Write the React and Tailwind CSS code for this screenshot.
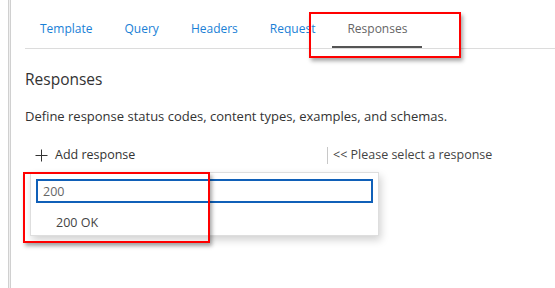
import React from "react";

export default function App() {
  const tabs = ["Template", "Query", "Headers", "Request", "Responses"];
  return (
    <div
      className="relative flex w-[555px] h-[288px] overflow-hidden bg-white"
      style={{ fontFamily: '"Open Sans", "Noto Sans", sans-serif' }}
    >
      <div className="ml-[8px] w-[3px] h-full border-x border-[#d0d0d0] bg-[#efefef]" />
      <div className="flex-1 pl-[14px] flex flex-col">
        <div className="h-[49px] border-b border-[#dcdcdc] flex items-end gap-[2px]">
          {tabs.map((t) => (
            <div
              key={t}
              className={
                "h-[36px] px-[15px] flex items-center text-[12px] border-b-2 " +
                (t === "Responses"
                  ? "text-[#666666] border-[#555555]"
                  : "text-[#1a7fd6] border-transparent")
              }
            >
              {t}
            </div>
          ))}
        </div>
        <div className="mt-[19px] text-[15.5px] leading-[22px] text-[#333333]">Responses</div>
        <div className="mt-[17px] text-[13px] leading-[18px] text-[#333333] whitespace-nowrap">
          Define response status codes, content types, examples, and schemas.
        </div>
        <div className="mt-[21px] flex items-center h-[18px]">
          <div className="w-[302px] flex items-center pl-[10px] text-[12.5px] text-[#333333]">
            <svg width="13" height="13" viewBox="0 0 13 13" className="mr-[7px]">
              <path d="M6.5 0.5v12M0.5 6.5h12" stroke="#333" strokeWidth="1" fill="none" />
            </svg>
            Add response
          </div>
          <div className="h-[17px] w-px bg-[#c8c8c8]" />
          <div className="pl-[5px] text-[12.5px] text-[#444444]">&lt;&lt; Please select a response</div>
        </div>
        <div className="mt-[8px] ml-[5px] w-[349px] h-[64px] border border-[#dedede] bg-white shadow-[2px_4px_8px_rgba(0,0,0,0.18)] p-[5px] pt-[6px]">
          <div className="h-[24px] border-2 border-[#1060b8] flex items-center pl-[5px] pt-[2px] text-[12.5px] text-[#666666]">
            200
          </div>
          <div className="pl-[20px] pt-[11px] text-[12.5px] text-[#444444]">200 OK</div>
        </div>
      </div>
      {/* annotation boxes */}
      <div className="absolute left-[309px] top-[12px] w-[152px] h-[46px] border-2 border-[#ff0000] shadow-[2px_3px_4px_rgba(0,0,0,0.35)]" />
      <div className="absolute left-[23px] top-[172px] w-[187px] h-[71px] border-2 border-[#ff0000] shadow-[2px_3px_4px_rgba(0,0,0,0.35)]" />
    </div>
  );
}
